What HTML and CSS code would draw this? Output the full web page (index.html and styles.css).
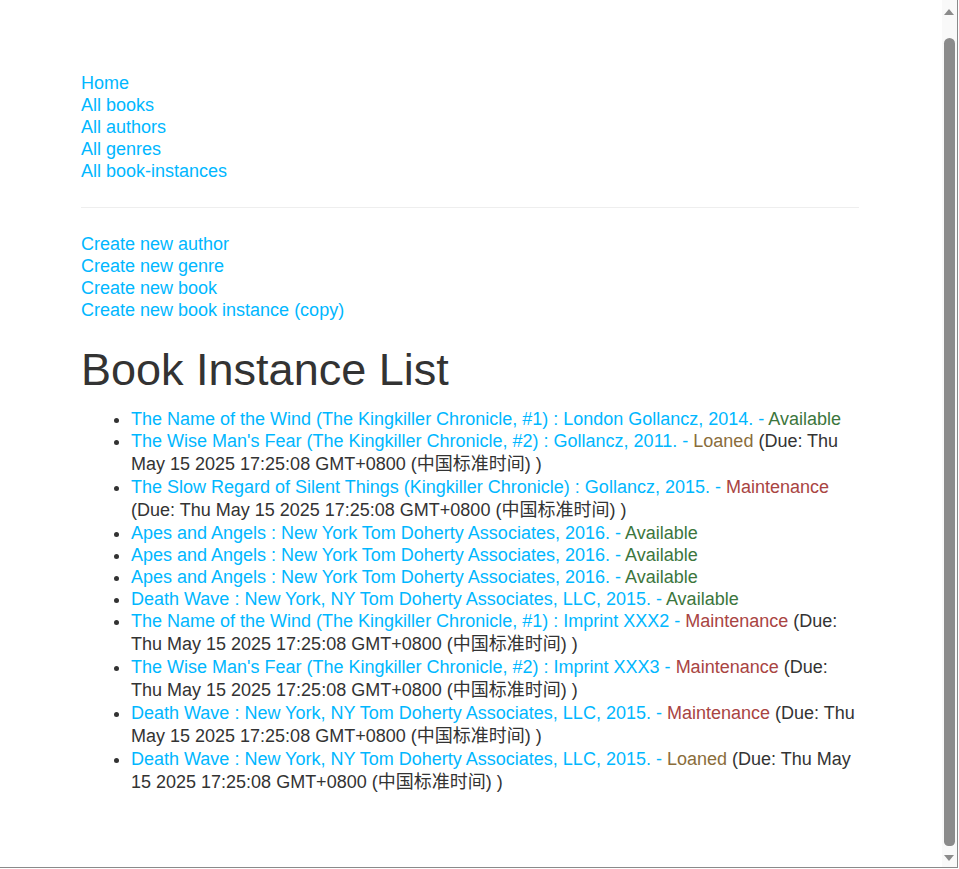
FILE: index.html
```html
<!DOCTYPE html>
<html lang="en">
<head>
<meta charset="utf-8">
<title>Local Library</title>
<link rel="stylesheet" href="styles.css">
</head>
<body>
<div class="page">
  <nav class="sidebar">
    <ul class="nav-list">
      <li><a href="#">Home</a></li>
      <li><a href="#">All books</a></li>
      <li><a href="#">All authors</a></li>
      <li><a href="#">All genres</a></li>
      <li><a href="#">All book-instances</a></li>
    </ul>
    <hr class="divider">
    <ul class="nav-list">
      <li><a href="#">Create new author</a></li>
      <li><a href="#">Create new genre</a></li>
      <li><a href="#">Create new book</a></li>
      <li><a href="#">Create new book instance (copy)</a></li>
    </ul>
  </nav>
  <main class="content">
    <h1 class="title">Book Instance List</h1>
    <ul class="instances">
      <li><a href="#">The Name of the Wind (The Kingkiller Chronicle, #1) : London Gollancz, 2014. - </a><span class="ok">Available</span></li>
      <li><a href="#">The Wise Man's Fear (The Kingkiller Chronicle, #2) : Gollancz, 2011. - </a><span class="loaned">Loaned</span> (Due: Thu May 15 2025 17:25:08 GMT+0800 (<span class="cjk">中国标准时间</span>) )</li>
      <li><a href="#">The Slow Regard of Silent Things (Kingkiller Chronicle) : Gollancz, 2015. - </a><span class="maint">Maintenance</span> (Due: Thu May 15 2025 17:25:08 GMT+0800 (<span class="cjk">中国标准时间</span>) )</li>
      <li><a href="#">Apes and Angels : New York Tom Doherty Associates, 2016. - </a><span class="ok">Available</span></li>
      <li><a href="#">Apes and Angels : New York Tom Doherty Associates, 2016. - </a><span class="ok">Available</span></li>
      <li><a href="#">Apes and Angels : New York Tom Doherty Associates, 2016. - </a><span class="ok">Available</span></li>
      <li><a href="#">Death Wave : New York, NY Tom Doherty Associates, LLC, 2015. - </a><span class="ok">Available</span></li>
      <li><a href="#">The Name of the Wind (The Kingkiller Chronicle, #1) : Imprint XXX2 - </a><span class="maint">Maintenance</span> (Due: Thu May 15 2025 17:25:08 GMT+0800 (<span class="cjk">中国标准时间</span>) )</li>
      <li><a href="#">The Wise Man's Fear (The Kingkiller Chronicle, #2) : Imprint XXX3 - </a><span class="maint">Maintenance</span> (Due: Thu May 15 2025 17:25:08 GMT+0800 (<span class="cjk">中国标准时间</span>) )</li>
      <li><a href="#">Death Wave : New York, NY Tom Doherty Associates, LLC, 2015. - </a><span class="maint">Maintenance</span> (Due: Thu May 15 2025 17:25:08 GMT+0800 (<span class="cjk">中国标准时间</span>) )</li>
      <li><a href="#">Death Wave : New York, NY Tom Doherty Associates, LLC, 2015. - </a><span class="loaned">Loaned</span> (Due: Thu May 15 2025 17:25:08 GMT+0800 (<span class="cjk">中国标准时间</span>) )</li>
    </ul>
  </main>
</div>
<div class="scrollbar" aria-hidden="true">
  <div class="arrow-up"></div>
  <div class="thumb"></div>
  <div class="arrow-down"></div>
</div>
<div class="frame-bottom" aria-hidden="true"></div>
</body>
</html>
```
FILE: styles.css
```css
html {
  overflow: hidden;
}
body {
  margin: 0;
  background: #fff;
  color: #333;
  font-family: "Liberation Sans", Arial, "Noto Sans CJK SC", sans-serif;
  font-size: 18px;
  line-height: 22px;
}
.page {
  width: 778px;
  padding: 72px 0 105px 81px;
}
a {
  color: #00b7ff;
  text-decoration: none;
}
.nav-list {
  list-style: none;
  margin: 0;
  padding: 0;
}
.divider {
  border: 0;
  border-top: 1px solid #eee;
  margin: 25px 0 25px;
  height: 0;
}
.title {
  font-size: 45px;
  font-weight: 400;
  line-height: 49px;
  margin: 24px 0 14px;
  color: #333;
}
.instances {
  margin: 0;
  padding-left: 50px;
}
.cjk {
  line-height: 24px;
}
.ok { color: #3c763d; }
.loaned { color: #8a6d3b; }
.maint { color: #a94442; }

/* browser chrome: scrollbar + window frame */
.scrollbar {
  position: fixed;
  top: 0;
  left: 942px;
  width: 15px;
  height: 867px;
  background: #f9f9f9;
  border-right: 1px solid #8a8a8a;
}
.arrow-up,
.arrow-down {
  position: absolute;
  left: 2px;
  width: 0;
  height: 0;
  border-left: 5.5px solid transparent;
  border-right: 5.5px solid transparent;
}
.arrow-up {
  top: 9px;
  border-bottom: 6px solid #8b8b8b;
}
.arrow-down {
  bottom: 6px;
  border-top: 6px solid #8b8b8b;
}
.thumb {
  position: absolute;
  left: 2px;
  top: 38px;
  width: 11px;
  height: 808px;
  background: #8b8b8b;
  border-radius: 6px 6px 5px 5px;
}
.frame-bottom {
  position: fixed;
  left: 0;
  top: 867px;
  width: 958px;
  height: 1px;
  background: #8a8a8a;
}
```
